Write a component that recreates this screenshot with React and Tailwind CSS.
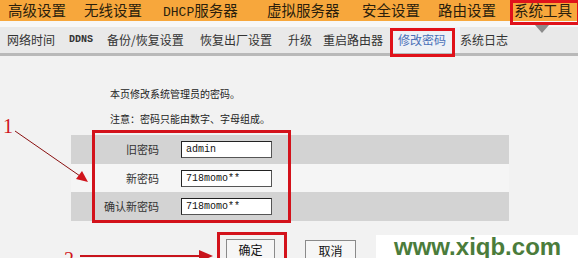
import React from 'react';

const mainTabs = [
    { label: '高级设置', w: 'w-[76px]' },
    { label: '无线设置', w: 'w-[79px]' },
    { label: 'DHCP服务器', w: 'w-[104px]' },
    { label: '虚拟服务器', w: 'w-[95px]' },
    { label: '安全设置', w: 'w-[76px]' },
    { label: '路由设置', w: 'w-[76px]' },
    { label: '系统工具', w: 'w-[64px]' },
];

const subTabs = [
    { label: '网络时间', w: 'w-[62px]' },
    { label: 'DDNS', w: 'w-[38px]', mono: true },
    { label: '备份/恢复设置', w: 'w-[93px]' },
    { label: '恢复出厂设置', w: 'w-[88px]' },
    { label: '升级', w: 'w-[35px]' },
    { label: '重启路由器', w: 'w-[67px]' },
    { label: '修改密码', w: 'w-[70px]', active: true },
    { label: '系统日志', w: 'w-[60px]' },
];

const rows = [
    { label: '旧密码', value: 'admin', bg: 'bg-[#d3d3d3]', h: 'h-[29px]' },
    { label: '新密码', value: '718momo**', bg: 'bg-[#f5f5f5]', h: 'h-[28px]' },
    { label: '确认新密码', value: '718momo**', bg: 'bg-[#d3d3d3]', h: 'h-[29px]' },
];

const App = () => {
    return (
        <div className="relative w-[578px] h-[258px] overflow-hidden bg-[#f2f2f2] font-['Noto_Sans_CJK_SC',sans-serif] text-[#333]">
            {/* main menu */}
            <div className="flex h-[21px] items-center bg-[#f7a73c] pl-[8px] text-[14.5px] leading-none text-[#2a1e0c]">
                {mainTabs.map(t => (
                    <span key={t.label} className={`${t.w} shrink-0 whitespace-nowrap`}>
                        {t.label.startsWith('DHCP') ? (
                            <><span className="font-['Liberation_Mono',monospace] text-[13px]">DHCP</span>服务器</>
                        ) : t.label}
                    </span>
                ))}
            </div>
            <div className="h-[6px] bg-[#f7f7f7]" />

            {/* sub menu */}
            <div className="flex h-[26px] items-stretch bg-[#e9e9e9] pl-[7px] text-[12px] leading-none">
                {subTabs.map(t => (
                    <span
                        key={t.label}
                        className={`${t.w} flex shrink-0 items-center whitespace-nowrap ${t.mono ? "font-['Liberation_Mono',monospace] text-[10px] font-bold" : ''} ${t.active ? 'pl-[8px] bg-[#eef1f6] text-[#4a70b8]' : ''}`}
                    >
                        {t.label}
                    </span>
                ))}
            </div>
            <div className="h-[3px] bg-[#b9b9b9]" />

            {/* content */}
            <div className="pl-[110px] pt-[33px] text-[10px] leading-none text-[#222]">
                <p>本页修改系统管理员的密码。</p>
                <p className="mt-[15px]">注意：密码只能由数字、字母组成。</p>
            </div>
            <div className="ml-[71px] mt-[11px] w-[438px] text-[11px]">
                {rows.map(r => (
                    <div key={r.label} className={`flex items-center ${r.h} ${r.bg}`}>
                        <span className="w-[88px] text-right text-[#333]">{r.label}</span>
                        <div className="ml-[22px] flex h-[17px] w-[91px] items-center border border-[#555] border-t-[#222] border-l-[#222] bg-white pl-[4px] font-['Liberation_Mono',monospace] text-[10px] text-[#111]">
                            {r.value}
                        </div>
                    </div>
                ))}
            </div>
            <div className="ml-[226px] mt-[18px] flex gap-[30px] text-[12px]">
                <button className="h-[22px] w-[49px] border border-[#8a8a8a] bg-[#f6f6f6] leading-none text-[#111]">确定</button>
                <button className="mt-[1px] h-[22px] w-[51px] border border-[#8a8a8a] bg-[#f6f6f6] leading-none text-[#111]">取消</button>
            </div>

            {/* annotations */}
            <div className="absolute left-[510px] top-0 h-[25px] w-[70px] border-[3px] border-[#e0121b]" />
            <div className="absolute left-[535px] top-[25px] h-0 w-0 border-x-[7px] border-t-[8px] border-x-transparent border-t-[#8c8c8c]" />
            <div className="absolute left-[390px] top-[28px] h-[29px] w-[65px] border-[3px] border-[#e0121b]" />
            <div className="absolute left-[92px] top-[130px] h-[93px] w-[199px] border-[3px] border-[#d3121b]" />
            <div className="absolute left-[217px] top-[232px] h-[32px] w-[70px] border-[3px] border-[#d3121b]" />
            <span className="absolute left-[3px] top-[116px] font-['Liberation_Serif',serif] text-[20px] leading-none text-[#d0141c]">1</span>
            <span className="absolute left-[64px] top-[249px] font-['Liberation_Serif',serif] text-[20px] leading-none text-[#d0141c]">2</span>
            <svg className="pointer-events-none absolute left-0 top-0" width="578" height="258">
                <line x1="15" y1="131" x2="80" y2="176" stroke="#8a1010" strokeWidth="1" />
                <polygon points="88,182 76,179 82,171" fill="#d0141c" />
                <line x1="80" y1="256" x2="202" y2="256" stroke="#c8141c" strokeWidth="2" />
                <polygon points="213,256 199,250 199,262" fill="#c8141c" />
            </svg>
            <div className="absolute left-[376px] top-[235px] flex h-[23px] w-[202px] items-center bg-white pl-[18px]">
                <span className="font-['Liberation_Sans',sans-serif] text-[24px] font-bold leading-none text-[#4b7c3b]">www.xiqb.com</span>
            </div>
        </div>
    );
};

export default App;
